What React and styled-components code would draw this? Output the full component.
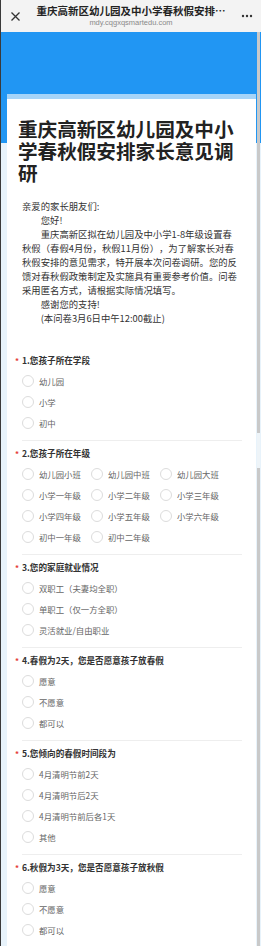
import styled, { createGlobalStyle } from "styled-components";

const GlobalStyle = createGlobalStyle`
  html, body {
    margin: 0;
    padding: 0;
    background: #e8f3fb;
  }
  body {
    font-family: "Noto Sans CJK SC", "Noto Sans", sans-serif;
  }
  * {
    box-sizing: border-box;
  }
`;

const Page = styled.div`
  width: 261px;
  min-height: 946px;
  border-left: 1px solid #3a3a3a;
  background: #e8f3fb;
  position: relative;
`;

const TopBar = styled.header`
  height: 32px;
  display: flex;
  align-items: center;
  background: #f3f3f3;
  padding: 0 8px 0 8px;
`;

const IconButton = styled.div`
  width: 12px;
  display: flex;
  align-items: center;
  justify-content: center;
  color: #333;
`;

const TitleBox = styled.div`
  flex: 1;
  min-width: 0;
  display: flex;
  flex-direction: column;
  align-items: center;
  padding: 0 6px;
`;

const PageTitle = styled.div`
  font-size: 10.5px;
  font-weight: 700;
  color: #222;
  line-height: 14px;
  white-space: nowrap;
`;

const Url = styled.div`
  font-family: "Liberation Sans", Arial, sans-serif;
  font-size: 7.5px;
  color: #8a8a8a;
  line-height: 10px;
`;

const Main = styled.main`
  background: linear-gradient(#2196f3 0, #2196f3 111px, #e8f3fb 111px);
  padding: 62px 5px 3px 6px;
`;

const Card = styled.section`
  background: #fff;
  border-top: 5px solid #a6d4f8;
  padding-bottom: 12px;
`;

const SurveyTitle = styled.h1`
  margin: 0;
  padding: 19px 20px 0 11px;
  font-size: 19.6px;
  line-height: 22px;
  font-weight: 700;
  color: #222;
`;

const Intro = styled.div`
  margin: 15px 0 0 15px;
  width: 219px;
  font-size: 9.35px;
  line-height: 14px;
  color: #333;
  text-spacing-trim: space-all;
`;

const Line = styled.p`
  margin: 0;
  text-indent: ${(p) => (p.$indent ? "2em" : "0")};
`;

const Questions = styled.div`
  margin-top: 28px;
  padding: 0 14px 0 8px;
`;

const Question = styled.div`
  border-bottom: ${(p) => (p.$last ? "none" : "1px solid #eeeeee")};
  margin-left: 7px;
  padding-bottom: 7px;
  margin-bottom: 5px;
`;

const QTitle = styled.div`
  display: flex;
  align-items: center;
  margin-left: -7px;
  gap: 3px;
  height: 14px;
  font-size: 8.6px;
  font-weight: 700;
  color: #333;
`;

const Star = styled.span`
  width: 4px;
  color: #e53935;
  font-size: 8px;
`;

const Options = styled.div`
  padding-top: 3px;
  display: grid;
  grid-template-columns: ${(p) => (p.$cols === 3 ? "69px 69px 69px" : "1fr")};
`;

const Option = styled.label`
  height: 21px;
  display: flex;
  align-items: center;
  gap: 5px;
  font-size: 8.4px;
  color: #666;
  white-space: nowrap;
`;

const Radio = styled.span`
  width: 12px;
  height: 12px;
  border: 1px solid #dcdcdc;
  border-radius: 50%;
  background: #fff;
  flex-shrink: 0;
`;

const ScrollTrack = styled.div`
  position: absolute;
  top: 32px;
  right: 1px;
  bottom: 0;
  width: 3px;
  background: #c9c9c9;
`;

const ScrollThumb = styled.div`
  position: absolute;
  top: 401px;
  left: 0;
  width: 3px;
  height: 35px;
  background: #eef4f8;
`;

const questions = [
  { title: "1.您孩子所在学段", options: ["幼儿园", "小学", "初中"] },
  {
    title: "2.您孩子所在年级",
    cols: 3,
    options: [
      "幼儿园小班",
      "幼儿园中班",
      "幼儿园大班",
      "小学一年级",
      "小学二年级",
      "小学三年级",
      "小学四年级",
      "小学五年级",
      "小学六年级",
      "初中一年级",
      "初中二年级",
    ],
  },
  {
    title: "3.您的家庭就业情况",
    options: ["双职工（夫妻均全职）", "单职工（仅一方全职）", "灵活就业/自由职业"],
  },
  {
    title: "4.春假为2天，您是否愿意孩子放春假",
    options: ["愿意", "不愿意", "都可以"],
  },
  {
    title: "5.您倾向的春假时间段为",
    options: ["4月清明节前2天", "4月清明节后2天", "4月清明节前后各1天", "其他"],
  },
  {
    title: "6.秋假为3天，您是否愿意孩子放秋假",
    options: ["愿意", "不愿意", "都可以"],
  },
];

const App = () => {
  return (
    <>
      <GlobalStyle />
      <Page>
        <TopBar>
          <IconButton>
            <svg width="11" height="11" viewBox="0 0 11 11">
              <path d="M1.5 1.5 L9.5 9.5 M9.5 1.5 L1.5 9.5" stroke="#333" strokeWidth="1.3" />
            </svg>
          </IconButton>
          <TitleBox>
            <PageTitle>重庆高新区幼儿园及中小学春秋假安排…</PageTitle>
            <Url>mdy.cqgxqsmartedu.com</Url>
          </TitleBox>
          <IconButton>
            <svg width="12" height="4" viewBox="0 0 12 4">
              <circle cx="2" cy="2" r="1.2" fill="#333" />
              <circle cx="6" cy="2" r="1.2" fill="#333" />
              <circle cx="10" cy="2" r="1.2" fill="#333" />
            </svg>
          </IconButton>
        </TopBar>
        <Main>
          <Card>
            <SurveyTitle>重庆高新区幼儿园及中小学春秋假安排家长意见调研</SurveyTitle>
            <Intro>
              <Line>亲爱的家长朋友们:</Line>
              <Line $indent>您好!</Line>
              <Line $indent>
                重庆高新区拟在幼儿园及中小学1-8年级设置春秋假（春假4月份，秋假11月份），为了解家长对春秋假安排的意见需求，特开展本次问卷调研。您的反馈对春秋假政策制定及实施具有重要参考价值。问卷采用匿名方式，请根据实际情况填写。
              </Line>
              <Line $indent>感谢您的支持!</Line>
              <Line $indent>(本问卷3月6日中午12:00截止)</Line>
            </Intro>
            <Questions>
              {questions.map((q, i) => (
                <Question key={q.title} $last={i === questions.length - 1}>
                  <QTitle>
                    <Star>*</Star>
                    {q.title}
                  </QTitle>
                  <Options $cols={q.cols}>
                    {q.options.map((o) => (
                      <Option key={o}>
                        <Radio />
                        {o}
                      </Option>
                    ))}
                  </Options>
                </Question>
              ))}
            </Questions>
          </Card>
        </Main>
        <ScrollTrack>
          <ScrollThumb />
        </ScrollTrack>
      </Page>
    </>
  );
};

export default App;
